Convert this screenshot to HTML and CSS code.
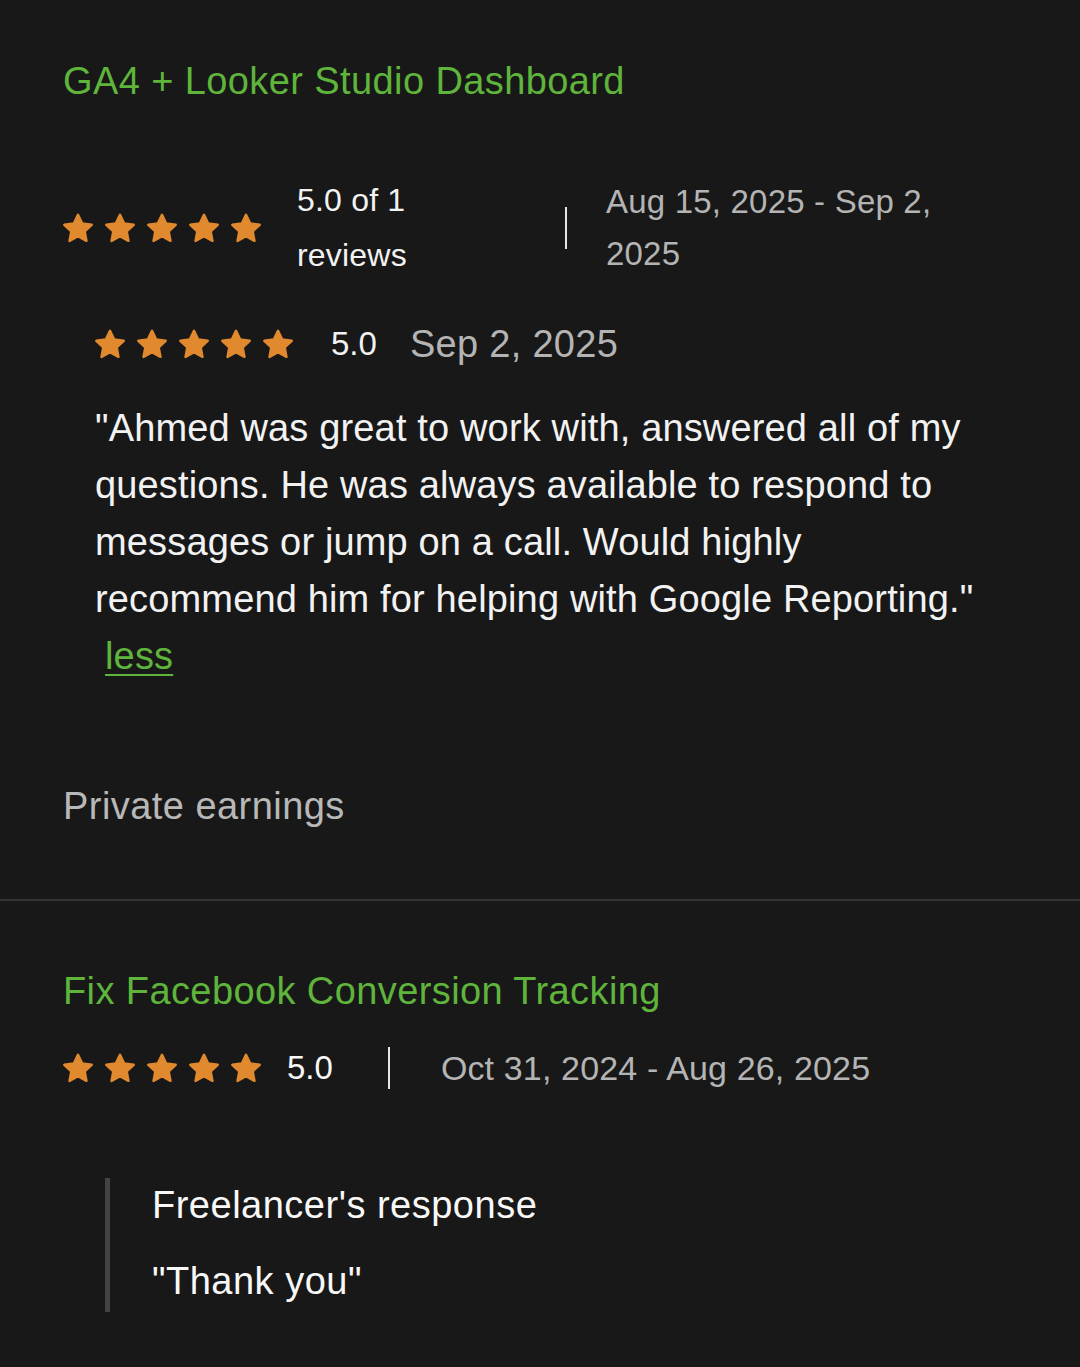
FILE: index.html
```html
<!DOCTYPE html>
<html lang="en">
<head>
<meta charset="utf-8">
<title>Work history</title>
<link rel="stylesheet" href="styles.css">
</head>
<body>
<svg width="0" height="0" class="defs" aria-hidden="true">
  <defs>
    <symbol id="star" viewBox="1.8 1.6 20.4 20.4">
      <path d="M12 2.8l2.85 5.95 6.45.85-4.75 4.5 1.2 6.45L12 17.4l-5.75 3.15 1.2-6.45L2.7 9.6l6.45-.85z" fill="#e0892e" stroke="#e0892e" stroke-width="1.7" stroke-linejoin="round"/>
    </symbol>
  </defs>
</svg>

<main class="page">
  <section class="job job-first">
    <h2 class="job-title">GA4 + Looker Studio Dashboard</h2>
    <div class="summary">
      <div class="stars">
        <svg class="star"><use href="#star"/></svg>
        <svg class="star"><use href="#star"/></svg>
        <svg class="star"><use href="#star"/></svg>
        <svg class="star"><use href="#star"/></svg>
        <svg class="star"><use href="#star"/></svg>
      </div>
      <div class="summary-score">5.0 of 1 reviews</div>
      <span class="divider divider-a"></span>
      <div class="summary-dates">Aug 15, 2025 - Sep 2, 2025</div>
    </div>

    <div class="review">
      <div class="review-head">
        <div class="stars">
          <svg class="star"><use href="#star"/></svg>
          <svg class="star"><use href="#star"/></svg>
          <svg class="star"><use href="#star"/></svg>
          <svg class="star"><use href="#star"/></svg>
          <svg class="star"><use href="#star"/></svg>
        </div>
        <span class="review-score">5.0</span>
        <span class="review-date">Sep 2, 2025</span>
      </div>
      <p class="review-text">"Ahmed was great to work with, answered all of my questions. He was always available to respond to messages or jump on a call. Would highly recommend him for helping with Google Reporting." <a class="less" href="#">less</a></p>
    </div>

    <div class="earnings">Private earnings</div>
  </section>

  <hr class="sep">

  <section class="job job-second">
    <h2 class="job-title">Fix Facebook Conversion Tracking</h2>
    <div class="summary summary-inline">
      <div class="stars">
        <svg class="star"><use href="#star"/></svg>
        <svg class="star"><use href="#star"/></svg>
        <svg class="star"><use href="#star"/></svg>
        <svg class="star"><use href="#star"/></svg>
        <svg class="star"><use href="#star"/></svg>
      </div>
      <span class="inline-score">5.0</span>
      <span class="divider divider-b"></span>
      <span class="inline-dates">Oct 31, 2024 - Aug 26, 2025</span>
    </div>

    <blockquote class="response">
      <div class="response-title">Freelancer's response</div>
      <div class="response-text">"Thank you"</div>
    </blockquote>
  </section>
</main>
</body>
</html>
```

FILE: styles.css
```css
html, body {
  margin: 0;
  padding: 0;
  background: #181818;
}

body {
  font-family: "Liberation Sans", Arial, Helvetica, sans-serif;
  color: #f2f2f2;
  width: 1080px;
  min-height: 1367px;
}

.defs {
  position: absolute;
  width: 0;
  height: 0;
  overflow: hidden;
}

.page {
  display: flex;
  flex-direction: column;
}

.job {
  display: flex;
  flex-direction: column;
  padding-left: 63px;
  padding-right: 40px;
}

.job-first {
  padding-top: 58px;
  padding-bottom: 70px;
}

.job-second {
  padding-top: 67px;
}

.job-title {
  margin: 0;
  font-size: 38px;
  line-height: 46px;
  font-weight: normal;
  letter-spacing: 0.4px;
  color: #5fb43c;
}

.summary {
  display: flex;
  align-items: center;
  margin-top: 69px;
}

.stars {
  display: flex;
  gap: 12px;
  flex: 0 0 auto;
}

.star {
  width: 30px;
  height: 30px;
  display: block;
}

.summary-score {
  width: 150px;
  margin-left: 36px;
  font-size: 32px;
  line-height: 55px;
  letter-spacing: 0.2px;
  color: #f2f2f2;
}

.divider {
  display: block;
  width: 2px;
  height: 42px;
  background: #e6e6e6;
  flex: 0 0 auto;
}

.divider-a {
  margin-left: 118px;
}

.summary-dates {
  width: 360px;
  margin-left: 39px;
  font-size: 33px;
  line-height: 52px;
  letter-spacing: 0.2px;
  color: #b4b4b4;
}

.review {
  display: flex;
  flex-direction: column;
  margin-left: 32px;
  margin-top: 38px;
}

.review-head {
  display: flex;
  align-items: center;
  height: 46px;
}

.review-score {
  margin-left: 38px;
  font-size: 33px;
  color: #f2f2f2;
}

.review-date {
  margin-left: 33px;
  font-size: 38px;
  letter-spacing: 0.3px;
  color: #b4b4b4;
}

.review-text {
  margin: 33px 0 0;
  font-size: 38px;
  line-height: 57px;
  letter-spacing: 0.15px;
  color: #f2f2f2;
  padding-right: 30px;
}

.less {
  display: inline-block;
  margin-left: 10px;
  color: #5fb43c;
  text-decoration: underline;
  text-decoration-thickness: 2px;
  text-underline-offset: 5px;
}

.earnings {
  margin-top: 98px;
  font-size: 38px;
  line-height: 46px;
  letter-spacing: 0.45px;
  color: #b8b8b8;
}

.sep {
  margin: 0;
  border: 0;
  height: 2px;
  background: #353535;
}

.summary-inline {
  margin-top: 31px;
  height: 46px;
}

.inline-score {
  margin-left: 26px;
  font-size: 33px;
  color: #f8f8f8;
}

.divider-b {
  margin-left: 55px;
}

.inline-dates {
  margin-left: 51px;
  font-size: 34px;
  letter-spacing: 0.15px;
  color: #b4b4b4;
}

.response {
  margin: 87px 0 0 42px;
  padding: 4px 0 8px 42px;
  border-left: 5px solid #434343;
  display: flex;
  flex-direction: column;
  gap: 30px;
}

.response-title,
.response-text {
  font-size: 38px;
  line-height: 46px;
  letter-spacing: 0.5px;
  color: #f8f8f8;
}
```
